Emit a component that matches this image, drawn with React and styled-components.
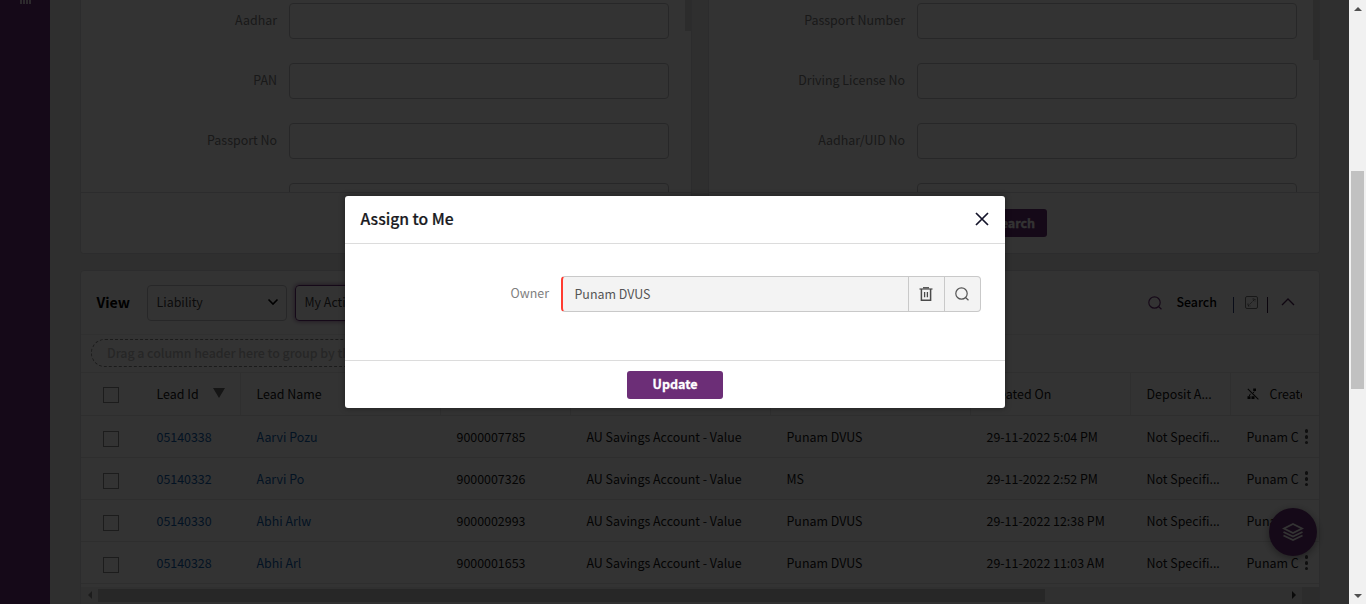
import React from "react";
import styled, { createGlobalStyle, css } from "styled-components";

const Global = createGlobalStyle`
  * { box-sizing: border-box; }
  html, body { margin: 0; height: 100%; overflow: hidden; }
  body {
    font-family: "Noto Sans CJK SC", "Noto Sans", sans-serif;
    font-size: 12.43px;
    line-height: 20px;
    color: #1c1c1c;
  }
`;

const Shell = styled.div`
  display: flex;
  height: 604px;
  overflow: hidden;
`;
const Page = styled.div`
  position: relative;
  display: flex;
  width: 1349px;
  height: 604px;
  overflow: hidden;
  background: #ebebec;
`;
const Sidebar = styled.aside`
  width: 50px;
  flex: none;
  padding-left: 20px;
  background: #6c2e77;
`;
const Bars = styled.div`
  display: flex;
  gap: 1px;
  span { width: 2px; height: 4px; background: #d9cbdc; }
`;
const Main = styled.main`
  flex: 1;
  min-width: 0;
  padding: 0 29px 0 30px;
`;
const Panels = styled.div`
  display: flex;
  gap: 16px;
  margin-bottom: 16px;
`;
const Panel = styled.section`
  flex: 1;
  height: 254px;
  display: flex;
  flex-direction: column;
  background: #fff;
  border: 1px solid #dcdcde;
  border-top: 0;
  border-radius: 0 0 4px 4px;
  overflow: hidden;
`;
const PanelBody = styled.div`
  display: flex;
  justify-content: space-between;
  height: 193px;
  overflow: hidden;
  border-bottom: 1px solid #dcdcde;
`;
const Fields = styled.div`
  display: flex;
  flex-direction: column;
  gap: 24px;
  width: 588px;
  padding-top: 3px;
`;
const Field = styled.label`
  display: flex;
  gap: 12px;
  height: 36px;
  flex: none;
  color: #7d7d7d;
  span { flex: 1; text-align: right; padding-top: 7px; }
`;
const Input = styled.div`
  width: 380px;
  border: 1px solid #c4c4c6;
  border-radius: 4px;
`;
const Thumb = styled.div`
  width: 6px;
  height: ${(p) => p.$h}px;
  background: #dcdcdc;
`;
const PanelFooter = styled.div`
  display: flex;
  justify-content: center;
  padding-top: 16px;
`;
const Button = styled.button`
  width: ${(p) => p.$w}px;
  height: 28px;
  padding: 0;
  border: 0;
  border-radius: 3px;
  background: #6c2e77;
  color: #fff;
  font: bold 12.5px/26px "Noto Sans CJK SC", sans-serif;
  padding-bottom: ${(p) => p.$lift || 0}px;
  -webkit-text-stroke: 0.3px #fff;
`;

const ViewCard = styled.section`
  height: 360px;
  background: #fff;
  border: 1px solid #dcdcde;
  border-radius: 4px;
  overflow: hidden;
`;
const Toolbar = styled.div`
  display: flex;
  align-items: center;
  height: 64px;
  padding: 0 24px 0 15.5px;
  border-bottom: 1px solid #ededed;
`;
const ViewTitle = styled.h2`
  width: 50.5px;
  margin: 0;
  padding-bottom: 1px;
  font-size: 14.2px;
  font-weight: bold;
  line-height: 22px;
  color: #000;
`;
const Select = styled.div`
  display: flex;
  align-items: center;
  justify-content: space-between;
  width: ${(p) => p.$w}px;
  height: 36px;
  margin-right: 8px;
  padding: 0 7px 2px 8.5px;
  border: 1px solid #c4c4c6;
  border-radius: 4px;
  color: #3c3c3c;
  white-space: nowrap;
  ${(p) => p.$focused && css`
    border-color: #6c2e77;
    box-shadow: 0 0 4px 1px rgba(108, 46, 119, 0.55);
  `}
`;
const Tools = styled.div`
  display: flex;
  align-items: center;
  margin-left: auto;
  color: #6c2e77;
  svg { display: block; }
`;
const ToolLabel = styled.span`
  margin: 0 16px 2px 14.5px;
  font-weight: 500;
  color: #000;
`;
const Divider = styled.i`
  width: 1px;
  height: 16px;
  margin: ${(p) => p.$m};
  background: ${(p) => p.$c};
`;
const GroupBar = styled.div`
  height: 38px;
  padding: 4px 0 0 10px;
  border-bottom: 1px solid #e9e9e9;
`;
const GroupPill = styled.div`
  width: 330px;
  height: 28px;
  padding: 3px 15px;
  border: 1px dashed #888;
  border-radius: 14px;
  color: #bcbcbc;
  font-weight: 500;
  line-height: 20px;
  letter-spacing: -0.05px;
  white-space: nowrap;
`;
const Row = styled.div`
  display: grid;
  grid-template-columns: 60px 100px 200px 130px 200px 200px 160px 100px 71px 16px;
  height: ${(p) => (p.$head ? 43 : 42)}px;
  border-bottom: 1px solid #e6e6e6;
`;
const Cell = styled.div`
  display: flex;
  align-items: center;
  min-width: 0;
  overflow: hidden;
  white-space: nowrap;
  padding-left: ${(p) => (p.$check ? 22 : 15.5)}px;
  color: ${(p) => (p.$link ? "#0f5fae" : "#141414")};
  border-right: ${(p) => (p.$head ? "1px solid #ececec" : "0")};
  svg { flex: none; }
`;
const Check = styled.span`
  width: 16px;
  height: 16px;
  margin-top: ${(p) => (p.$head ? 2 : 5)}px;
  border: 1px solid #8c8c8c;
`;
const SortMark = styled.span`
  margin: -3px 0 0 14px;
  border: 6px solid transparent;
  border-top: 10px solid #6a6a6a;
  border-bottom: 0;
`;
const Dots = styled.div`
  display: flex;
  flex-direction: column;
  align-items: center;
  gap: 2.2px;
  padding: 13.2px 7px 0 0;
  i { width: 3.6px; height: 3.6px; border-radius: 50%; background: #4a4a4a; }
`;
const HScroll = styled.div`
  display: flex;
  align-items: center;
  height: 17px;
  margin-top: 3px;
  padding-bottom: 1px;
  background: #f1f1f1;
`;
const HArrow = styled.span`
  width: 17px;
  display: flex;
  justify-content: center;
`;
const HThumb = styled.div`
  width: 947px;
  height: 13px;
  margin-right: 240px;
  background: #c1c1c1;
`;
const HCorner = styled.div`
  flex: 1;
  height: 17px;
  background: #dcdcdc;
`;
const Fab = styled.div`
  position: absolute;
  left: 1269px;
  top: 508px;
  width: 48px;
  height: 48px;
  border-radius: 50%;
  display: flex;
  align-items: center;
  justify-content: center;
  background: #6c2e77;
  box-shadow: 0 2px 8px rgba(0, 0, 0, 0.4);
`;
const Backdrop = styled.div`
  position: absolute;
  inset: 0;
  display: flex;
  justify-content: center;
  align-items: flex-start;
  padding: 196px 0 0 1px;
  background: rgba(0, 0, 0, 0.8);
`;
const Dialog = styled.div`
  width: 660px;
  height: 212px;
  display: flex;
  flex-direction: column;
  background: #fff;
  border-radius: 3px;
  box-shadow: 0 0 6px rgba(0, 0, 0, 0.4);
`;
const DialogHead = styled.header`
  display: flex;
  justify-content: space-between;
  align-items: center;
  height: 48px;
  padding: 0 16px 1px 15.5px;
  border-bottom: 1px solid #dcdcdc;
  h1 {
    margin: 0;
    font-size: 15.7px;
    font-weight: 500;
    line-height: 24px;
    color: #1a1a22;
    -webkit-text-stroke: 0.2px #1a1a22;
  }
`;
const DialogBody = styled.div`
  display: flex;
  height: 117px;
  padding: 32px 24px 0 0;
  justify-content: flex-end;
  gap: 12px;
  border-bottom: 1px solid #dcdcdc;
`;
const OwnerLabel = styled.label`
  padding-top: 7px;
  color: #808080;
`;
const Lookup = styled.div`
  display: flex;
  width: 420px;
  height: 36px;
  border: 1px solid #c9c9c9;
  border-left: 2px solid #ff3b30;
  border-radius: 4px;
  background: #f3f3f3;
  color: #555;
`;
const LookupValue = styled.div`
  flex: 1;
  padding: 7px 11.5px;
`;
const LookupAction = styled.span`
  width: 36px;
  padding-right: 1px;
  border-left: 1px solid #c9c9c9;
  display: flex;
  align-items: center;
  justify-content: center;
`;
const DialogFoot = styled.footer`
  display: flex;
  justify-content: center;
  padding-top: 10px;
`;
const PageScroll = styled.div`
  width: 17px;
  height: 604px;
  display: flex;
  flex-direction: column;
  align-items: center;
  background: #f1f1f1;
`;
const VArrow = styled.span`
  height: 17px;
  display: flex;
  align-items: center;
`;
const VThumb = styled.div`
  width: 13px;
  height: 218px;
  margin: 154px 0 198px;
  background: #c1c1c1;
`;
const UnsortIcon = styled.svg`
  margin-right: 11px;
`;

const Magnifier = () => (
  <svg width="14" height="14" viewBox="0 0 14 14" fill="none" stroke="currentColor" strokeWidth="1.2">
    <circle cx="6.5" cy="6.5" r="5.7" />
    <path d="M10.5 10.5L13.5 13.3" />
  </svg>
);
const Trash = () => (
  <svg width="14" height="14" viewBox="0 0 14 14" fill="none" stroke="#4a4a4a">
    <path d="M0.5 2H13.5" strokeWidth="1.2" />
    <path d="M4 0.8H10" strokeWidth="1.4" />
    <path d="M2.4 2V13.2H11.6V2" strokeWidth="1.5" />
    <path d="M5.6 5V10.2M8.4 5V10.2" strokeWidth="1.3" />
  </svg>
);
const Arrow = ({ d, w, h, fill }) => (
  <svg width={w} height={h} viewBox={`0 0 ${w} ${h}`}><path d={d} fill={fill} /></svg>
);

const leads = [
  ["05140338", "Aarvi Pozu", "9000007785", "Punam DVUS", "29-11-2022 5:04 PM"],
  ["05140332", "Aarvi Po", "9000007326", "MS", "29-11-2022 2:52 PM"],
  ["05140330", "Abhi Arlw", "9000002993", "Punam DVUS", "29-11-2022 12:38 PM"],
  ["05140328", "Abhi Arl", "9000001653", "Punam DVUS", "29-11-2022 11:03 AM"],
];

function SearchPanel({ labels, thumb }) {
  return (
    <Panel>
      <PanelBody>
        <Fields>
          {labels.map((l, i) => (
            <Field key={i}><span>{l}</span><Input /></Field>
          ))}
        </Fields>
        <Thumb $h={thumb} />
      </PanelBody>
      <PanelFooter><Button $w={66}>Search</Button></PanelFooter>
    </Panel>
  );
}

export default function App() {
  return (
    <Shell>
      <Global />
      <Page>
        <Sidebar><Bars><span /><span /><span /><span /></Bars></Sidebar>
        <Main>
          <Panels>
            <SearchPanel labels={["Aadhar", "PAN", "Passport No", ""]} thumb={31} />
            <SearchPanel labels={["Passport Number", "Driving License No", "Aadhar/UID No", ""]} thumb={60} />
          </Panels>
          <ViewCard>
            <Toolbar>
              <ViewTitle>View</ViewTitle>
              <Select $w={140}>
                Liability
                <svg width="12" height="8" viewBox="0 0 12 8" fill="none" stroke="#000" strokeWidth="1.6"><path d="M1.5 1.5L6 6L10.5 1.5" /></svg>
              </Select>
              <Select $w={180} $focused>My Active Leads</Select>
              <Tools>
                <Magnifier />
                <ToolLabel>Search</ToolLabel>
                <Divider $m="4px 11px 0 0" $c="#2f3e78" />
                <svg width="14" height="14" viewBox="0 0 14 14" fill="none" stroke="#777">
                  <rect x="0.5" y="0.5" width="12" height="12" rx="1.5" />
                  <path d="M3 10L10 3M7.5 3H10V5.5M3 7.5V10H5.5" strokeDasharray="1.6 0.7" />
                </svg>
                <Divider $m="4px 13px 0 8px" $c="#3a1a40" />
                <svg width="14" height="11" viewBox="0 0 14 11" fill="none" stroke="#4c2055" strokeWidth="1.4"><path d="M1 8L7 2L13 8" /></svg>
              </Tools>
            </Toolbar>
            <GroupBar><GroupPill>Drag a column header here to group by that column</GroupPill></GroupBar>
            <Row $head>
              <Cell $check><Check $head /></Cell>
              <Cell $head>Lead Id<SortMark /></Cell>
              <Cell $head>Lead Name</Cell>
              <Cell $head>Mobile</Cell>
              <Cell $head>Product</Cell>
              <Cell $head>Owner</Cell>
              <Cell $head>Created On</Cell>
              <Cell $head>Deposit A...</Cell>
              <Cell>
                <UnsortIcon width="12" height="12" viewBox="0 0 12 12" fill="none" stroke="#111">
                  <path d="M0.8 0.8L11.4 11.4" strokeWidth="1.1" />
                  <path d="M2.2 8.2L3.4 5.8M7.2 3.6L6.2 5" strokeWidth="1" />
                  <path d="M0.5 9.6H3.5M4.5 9.6H7.5M6.2 1.8H9" strokeWidth="2.6" />
                </UnsortIcon>
                Created By
              </Cell>
            </Row>
            {leads.map(([id, name, phone, owner, created]) => (
              <Row key={id}>
                <Cell $check><Check /></Cell>
                <Cell $link>{id}</Cell>
                <Cell $link>{name}</Cell>
                <Cell>{phone}</Cell>
                <Cell>AU Savings Account - Value</Cell>
                <Cell>{owner}</Cell>
                <Cell>{created}</Cell>
                <Cell>Not Specifi...</Cell>
                <Cell>Punam C</Cell>
                <Dots><i /><i /><i /></Dots>
              </Row>
            ))}
            <HScroll>
              <HArrow><Arrow w={4} h={8} d="M4 0L0 4L4 8Z" fill="#8a8a8a" /></HArrow>
              <HThumb />
              <HArrow><Arrow w={4} h={8} d="M0 0L4 4L0 8Z" fill="#333" /></HArrow>
              <HCorner />
            </HScroll>
          </ViewCard>
        </Main>
        <Fab>
          <svg width="22" height="20" viewBox="0 0 22 20" fill="none" stroke="#fff" strokeWidth="1.8">
            <path d="M11 2L20 6.5L11 11L2 6.5Z" />
            <path d="M1.5 10L11 14.6L20.5 10M1.5 13.5L11 18.1L20.5 13.5" />
          </svg>
        </Fab>
        <Backdrop>
          <Dialog>
            <DialogHead>
              <h1>Assign to Me</h1>
              <svg width="14" height="14" viewBox="0 0 14 14" fill="none" stroke="#14142a" strokeWidth="1.7"><path d="M1 1L13 13M13 1L1 13" /></svg>
            </DialogHead>
            <DialogBody>
              <OwnerLabel>Owner</OwnerLabel>
              <Lookup>
                <LookupValue>Punam DVUS</LookupValue>
                <LookupAction><Trash /></LookupAction>
                <LookupAction><Magnifier /></LookupAction>
              </Lookup>
            </DialogBody>
            <DialogFoot><Button $w={96} $lift={2}>Update</Button></DialogFoot>
          </Dialog>
        </Backdrop>
      </Page>
      <PageScroll>
        <VArrow><Arrow w={8} h={4} d="M0 4L4 0L8 4Z" fill="#505050" /></VArrow>
        <VThumb />
        <VArrow><Arrow w={8} h={4} d="M0 0L4 4L8 0Z" fill="#505050" /></VArrow>
      </PageScroll>
    </Shell>
  );
}
